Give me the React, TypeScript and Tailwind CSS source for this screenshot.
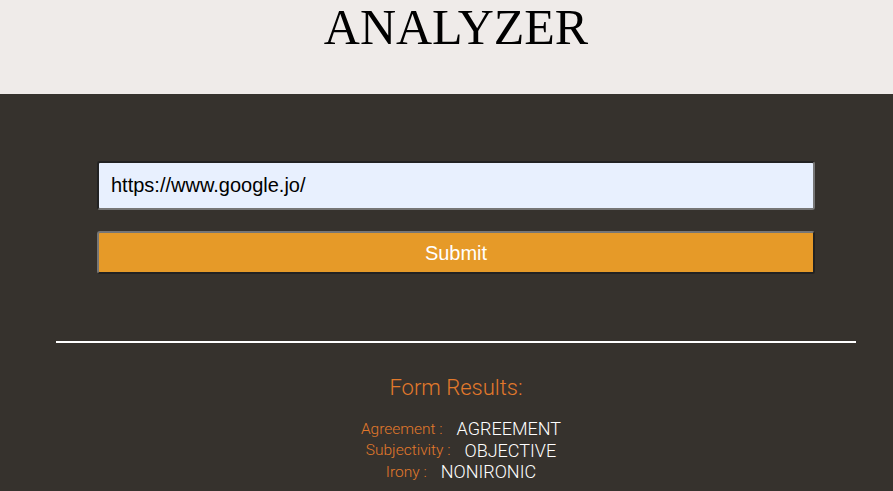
import React from "react";

const results = [
  { label: "Agreement :", value: "AGREEMENT" },
  { label: "Subjectivity :", value: "OBJECTIVE" },
  { label: "Irony :", value: "NONIRONIC" },
];

const App = () => {
  return (
    <div className="w-[893px] h-[491px] overflow-hidden bg-[#36322d]">
      <header className="h-[94px] bg-[#efebe9] flex justify-center pl-[19px]">
        <h1 className="text-[50px] leading-none pt-[2px] text-black font-['Liberation_Serif',serif]">
          ANALYZER
        </h1>
      </header>
      <main className="ml-[56px] w-[800px]">
        <form className="px-[41px] pt-[67px] flex flex-col gap-[21px]">
          <input
            type="text"
            defaultValue="https://www.google.jo/"
            className="h-[49px] w-full rounded-[3px] bg-[#e8f0fe] px-[12px] text-[20px] text-black font-['Liberation_Sans',Arial,sans-serif] border-2 border-t-[#222] border-l-[#222] border-b-[#767676] border-r-[#767676] outline-none"
          />
          <button
            type="button"
            className="h-[43px] w-full rounded-[3px] bg-[#e69a28] text-white text-[20px] font-['Liberation_Sans',Arial,sans-serif] border-2 border-t-[#767676] border-l-[#767676] border-b-[#222] border-r-[#222]"
          >
            Submit
          </button>
        </form>
        <hr className="mt-[67px] border-0 h-[2px] bg-white" />
        <section className="flex flex-col items-center pt-[33px] font-['Roboto',sans-serif] font-light">
          <h2 className="text-[22px] leading-[24px] text-[#e2792b]">Form Results:</h2>
          <div className="mt-[18px] pl-[10px] flex flex-col items-center">
            {results.map((r) => (
              <div key={r.label} className="flex items-center h-[21.5px] gap-[14px]">
                <span className="text-[#e2792b] text-[15.5px] leading-[21px] pt-[1px]">{r.label}</span>
                <span className="text-white text-[18px] leading-[21px]">{r.value}</span>
              </div>
            ))}
          </div>
        </section>
      </main>
    </div>
  );
};

export default App;
